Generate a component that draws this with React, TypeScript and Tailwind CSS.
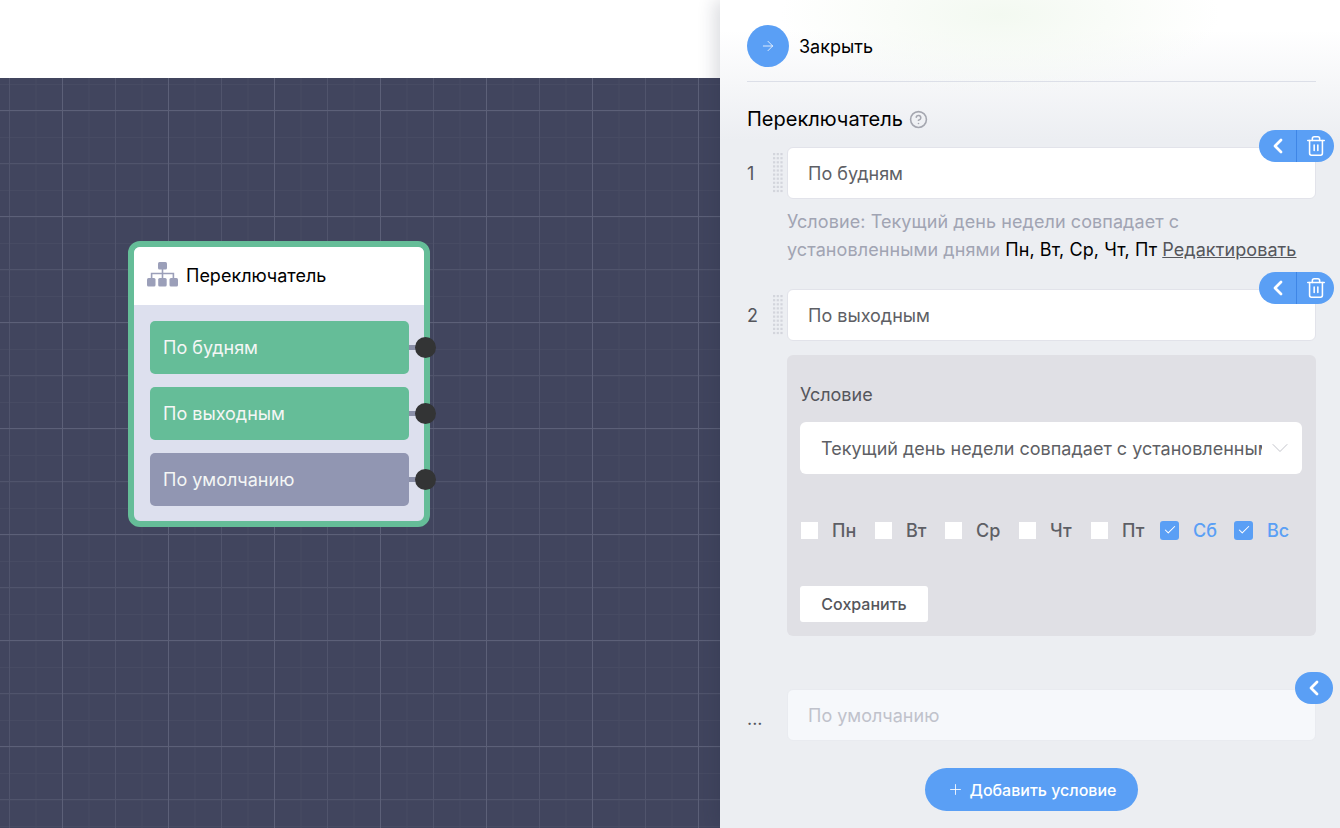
import { ArrowRight, Check, ChevronDown, ChevronLeft, CircleHelp, Plus, Trash2 } from "lucide-react";

const Handle = () => (
  <svg width="10" height="40" className="shrink-0" fill="#d3d5dc">
    {Array.from({ length: 10 }).map((_, r) =>
      [0, 1, 2].map((c) => <rect key={`${r}-${c}`} x={c * 3.7} y={r * 4.1} width="2.2" height="2.2" />)
    )}
  </svg>
);

const Tree = () => (
  <svg width="31" height="25" viewBox="0 0 31 25" fill="#9b9fb9" className="shrink-0 -translate-y-[2px]">
    <rect x="11" y="0" width="9" height="7.5" rx="1.5" />
    <path d="M14.700 7h1.600v3.700h10.900v5.300h-1.600v-3.700h-9.300v3.700h-1.600v-3.700H5.400v3.700H3.800v-5.300h10.900z" />
    <rect x="0" y="16" width="8.500" height="8.500" rx="1.500" />
    <rect x="11.200" y="16" width="8.500" height="8.500" rx="1.500" />
    <rect x="22.500" y="16" width="8.500" height="8.500" rx="1.500" />
  </svg>
);

const NodeItem = ({ label, grey }: { label: string; grey?: boolean }) => (
  <div className="relative">
    <div className={`flex h-[53px] w-[259px] items-center rounded-[5px] pl-[13px] text-[18px] text-[#f4f6f5] ${grey ? "bg-[#9196b2]" : "bg-[#65bd98]"}`}>
      {label}
    </div>
    <div className="absolute left-[259px] top-[24px] h-[5px] w-[8px] bg-[#8a8fa8]" />
    <div className="absolute left-[265px] top-[16px] h-[21px] w-[21px] rounded-full bg-[#333435]" />
  </div>
);

const Actions = ({ trash = true }: { trash?: boolean }) => (
  <div className={`absolute right-[-18px] flex h-[32px] overflow-hidden rounded-full bg-[#5a9ff5] text-white ${trash ? "top-[-17px] w-[75px]" : "top-[-18px] w-[38px]"}`}>
    <div className={`flex h-full w-[38px] items-center justify-center ${trash ? "border-r border-[#3f86e6]" : ""}`}>
      <ChevronLeft size={24} strokeWidth={2.8} />
    </div>
    {trash && (
      <div className="flex h-full flex-1 items-center justify-center">
        <Trash2 size={22} strokeWidth={1.7} />
      </div>
    )}
  </div>
);

const TextRow = ({ n, value }: { n: string; value: string }) => (
  <div className="flex items-center">
    <div className="w-[26px] text-[18px] text-[#55565c]">{n}</div>
    <Handle />
    <div className="relative ml-[4px] flex-1">
      <div className="flex h-[52px] items-center rounded-[6px] border border-[#e2e3ea] bg-white pl-[20px] text-[18px] text-[#5e5f65]">
        {value}
      </div>
      <Actions />
    </div>
  </div>
);

const Day = ({ label, on, w }: { label: string; on?: boolean; w: string }) => (
  <div className={`flex items-center ${w}`}>
    {on ? (
      <div className="flex h-[19px] w-[19px] items-center justify-center rounded-[3px] bg-[#5a9ff5] text-white">
        <Check size={14} strokeWidth={1.8} />
      </div>
    ) : (
      <div className="ml-[1px] h-[17px] w-[17px] bg-white" />
    )}
    <span className={`ml-[14px] text-[18px] font-medium ${on ? "text-[#5a9ff5]" : "text-[#5e5f65]"}`}>{label}</span>
  </div>
);

export default function App() {
  return (
    <div className="relative flex h-[828px] w-[1340px] overflow-hidden bg-white font-['Inter',sans-serif]">
      <div className="flex w-[720px] shrink-0 flex-col">
        <div className="h-[78px] bg-white" />
        <div className="relative flex-1 bg-[#41455e] bg-[linear-gradient(#5c6078_1px,transparent_1px),linear-gradient(90deg,#5c6078_1px,transparent_1px),linear-gradient(#50546c_1px,transparent_1px),linear-gradient(90deg,#50546c_1px,transparent_1px),linear-gradient(#474b63_1px,transparent_1px),linear-gradient(90deg,#474b63_1px,transparent_1px)] bg-[length:106px_106px,106px_106px,53px_53px,53px_53px,26.500px_26.500px,26.500px_26.500px] bg-[position:0_32px,62px_0,0_32px,62px_0,0_6px,9px_0]">
          <div className="absolute left-[128px] top-[163px] h-[286px] w-[302px] rounded-[12px] border-[6px] border-[#65bd98] bg-[#dde0ee]">
            <div className="flex h-[58px] items-center gap-[8px] rounded-t-[6px] bg-white pl-[13px] text-[18px] text-black">
              <Tree />
              <span className="-translate-y-[1px]">Переключатель</span>
            </div>
            <div className="flex flex-col gap-[13px] pl-[16px] pt-[16px]">
              <NodeItem label="По будням" />
              <NodeItem label="По выходным" />
              <NodeItem label="По умолчанию" grey />
            </div>
          </div>
        </div>
      </div>

      <div className="relative flex w-[620px] shrink-0 flex-col bg-[#eceef2] bg-[radial-gradient(ellipse_220px_80px_at_280px_15px,#f3f9f1,transparent),linear-gradient(to_bottom,#ffffff_0px,#ffffff_30px,#eceef2_140px)] pl-[27px] pr-[24px] shadow-[-6px_0_16px_rgba(30,35,60,0.15)]">
        <div className="flex h-[82px] items-center gap-[10px] border-b border-[#dcdfe8] pb-[12px] pt-[23px]">
          <div className="flex h-[42px] w-[42px] items-center justify-center rounded-full bg-[#5a9ff5] text-white">
            <ArrowRight size={16} strokeWidth={1.2} />
          </div>
          <span className="text-[18px] text-black">Закрыть</span>
        </div>

        <div className="mt-[24px] flex h-[26px] items-center gap-[6px]">
          <span className="text-[20px] text-black">Переключатель</span>
          <CircleHelp size={19} strokeWidth={2} className="text-[#a5a7b0]" />
        </div>

        <div className="mt-[15px]">
          <TextRow n="1" value="По будням" />
        </div>
        <p className="ml-[40px] mt-[9px] text-[18px] leading-[28px] tracking-[0.08px] text-[#a1a4b3]">
          Условие: Текущий день недели совпадает с
          <br />
          установленными днями <span className="text-black">Пн, Вт, Ср, Чт, Пт</span>{" "}
          <span className="text-[#55565c] underline">Редактировать</span>
        </p>

        <div className="mt-[25px]">
          <TextRow n="2" value="По выходным" />
        </div>

        <div className="ml-[40px] mt-[14px] h-[281px] rounded-[6px] bg-[#e0e0e5] pl-[13px] pr-[14px]">
          <div className="pt-[27px] text-[18px] leading-[26px] text-[#55565c]">Условие</div>
          <div className="mt-[14px] flex h-[52px] items-center rounded-[6px] bg-white pl-[21px] pr-[8px] text-[18px] text-[#5e5f65]">
            <span className="w-[441px] overflow-hidden whitespace-nowrap">Текущий день недели совпадает с установленными днями</span>
            <ChevronDown size={28} strokeWidth={0.6} className="ml-auto text-[#a9abb5]" />
          </div>
          <div className="mt-[46px] flex h-[20px] items-center">
            <Day label="Пн" w="w-[74px]" />
            <Day label="Вт" w="w-[70px]" />
            <Day label="Ср" w="w-[74px]" />
            <Day label="Чт" w="w-[72px]" />
            <Day label="Пт" w="w-[70px]" />
            <Day label="Сб" on w="w-[74px]" />
            <Day label="Вс" on w="w-[60px]" />
          </div>
          <button className="mt-[46px] h-[36px] w-[128px] rounded-[3px] bg-white text-[16px] font-medium text-[#55565c]">Сохранить</button>
        </div>

        <div className="mt-[53px] flex items-center">
          <div className="w-[40px] pt-[8px] text-[18px] leading-[20px] text-[#55565c]">...</div>
          <div className="relative flex h-[52px] flex-1 items-center rounded-[6px] border border-[#e9ebf0] bg-[#f6f8fb] pl-[20px] text-[18px] text-[#c0c2cb]">
            По умолчанию
            <Actions trash={false} />
          </div>
        </div>

        <div className="mt-[27px] flex justify-center">
          <button className="flex h-[43px] w-[213px] items-center justify-center gap-[6px] rounded-full bg-[#5a9ff5] text-[16px] font-medium text-white">
            <Plus size={17} strokeWidth={1.2} />
            Добавить условие
          </button>
        </div>
      </div>
    </div>
  );
}
